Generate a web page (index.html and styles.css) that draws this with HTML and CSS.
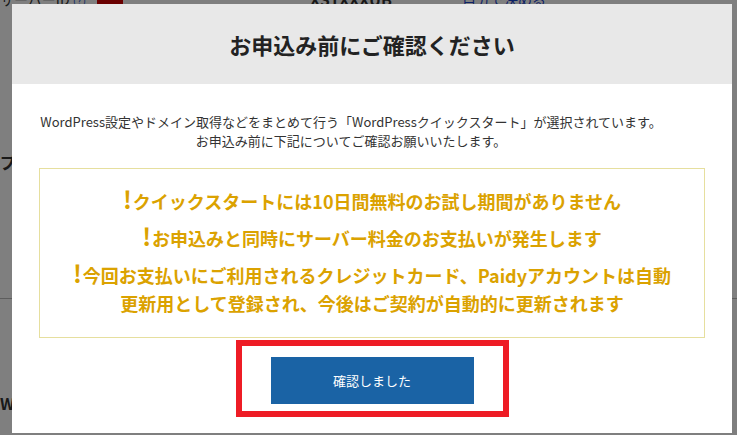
FILE: index.html
```html
<!DOCTYPE html>
<html lang="ja">
<head>
    <meta charset="UTF-8">
    <meta name="viewport" content="width=device-width, initial-scale=1.0">
    <title>お申込み前にご確認ください</title>
    <link rel="stylesheet" href="styles.css">
</head>
<body>
    <div class="page">
        <div class="page-top">
            <span class="server-id">サーバーID <small>(?)</small></span>
            <span class="badge"></span>
            <span class="server-name">XS1XXXUB</span>
            <a class="page-link" href="#">自分で決める</a>
        </div>
        <div class="page-side">
            <p class="side-title">プ</p>
            <p class="side-w">W</p>
        </div>
    </div>

    <div class="overlay">
        <div class="modal">
            <div class="modal-header">
                <h1>お申込み前にご確認ください</h1>
            </div>
            <div class="modal-body">
                <p class="intro">WordPress設定やドメイン取得などをまとめて行う「WordPressクイックスタート」が選択されています。<br>お申込み前に下記についてご確認お願いいたします。</p>
                <div class="notice">
                    <p><span class="mark">!</span>クイックスタートには10日間無料のお試し期間がありません</p>
                    <p><span class="mark">!</span>お申込みと同時にサーバー料金のお支払いが発生します</p>
                    <p><span class="mark">!</span>今回お支払いにご利用されるクレジットカード、Paidyアカウントは自動<br>更新用として登録され、今後はご契約が自動的に更新されます</p>
                </div>
                <div class="highlight">
                    <button class="confirm-button" type="button">確認しました</button>
                </div>
            </div>
        </div>
    </div>
</body>
</html>
```

FILE: styles.css
```css
body {
    font-family: "Noto Sans CJK JP", "Noto Sans", sans-serif;
    background-color: #fff;
    color: #333;
    margin: 0;
    padding: 0;
    width: 737px;
    height: 435px;
    overflow: hidden;
}
.page {
    height: 435px;
}
.page-top {
    display: flex;
    align-items: center;
    margin-top: -12px;
    height: 22px;
    font-size: 14px;
}
.server-id {
    width: 97px;
}
.server-id small {
    color: #3366cc;
}
.badge {
    width: 26px;
    height: 20px;
    background-color: #d40000;
}
.server-name {
    margin-left: 187px;
    font-weight: bold;
    font-size: 16px;
}
.page-link {
    margin-left: 70px;
    color: #1a44cc;
    text-decoration: underline;
}
.page-side {
    padding-top: 140px;
}
.side-title {
    margin: 0;
    font-size: 16px;
    font-weight: bold;
    border-bottom: 1px solid #bbb;
    padding-bottom: 124px;
}
.side-w {
    margin: 92px 0 0;
    font-size: 16px;
    font-weight: bold;
}
.overlay {
    position: fixed;
    top: 0;
    left: 0;
    width: 100%;
    height: 100%;
    background-color: rgba(0, 0, 0, 0.5);
}
.modal {
    margin: 4px 0 0 12px;
    width: 720px;
    height: 429px;
    background-color: #fff;
}
.modal-header {
    height: 80px;
    background-color: #e8e8e8;
    display: flex;
    align-items: center;
    justify-content: center;
}
.modal-header h1 {
    margin: 0;
    font-size: 22px;
    font-weight: bold;
    color: #222;
}
.modal-body {
    padding: 28px 27px 0;
    display: flex;
    flex-direction: column;
    align-items: center;
}
.intro {
    margin: 0 0 18px;
    padding-right: 42px;
    font-size: 13px;
    line-height: 19px;
    text-align: center;
    color: #333;
}
.notice {
    box-sizing: border-box;
    width: 666px;
    border: 1px solid #e6df9e;
    padding: 9px 0 11px;
    text-align: center;
    color: #dba200;
    font-size: 18px;
    font-weight: bold;
}
.notice p {
    margin: 9px 0;
    line-height: 28px;
}
.mark {
    display: inline-block;
    font-size: 24px;
    line-height: 20px;
    font-weight: bold;
    margin-right: 1px;
}
.highlight {
    margin-top: 2px;
    border: 6px solid #ee1c25;
    padding: 11px 29px 7px;
}
.confirm-button {
    display: block;
    width: 203px;
    height: 47px;
    background-color: #1a63a5;
    color: white;
    border: none;
    font-family: inherit;
    font-size: 13px;
    cursor: pointer;
}
```
